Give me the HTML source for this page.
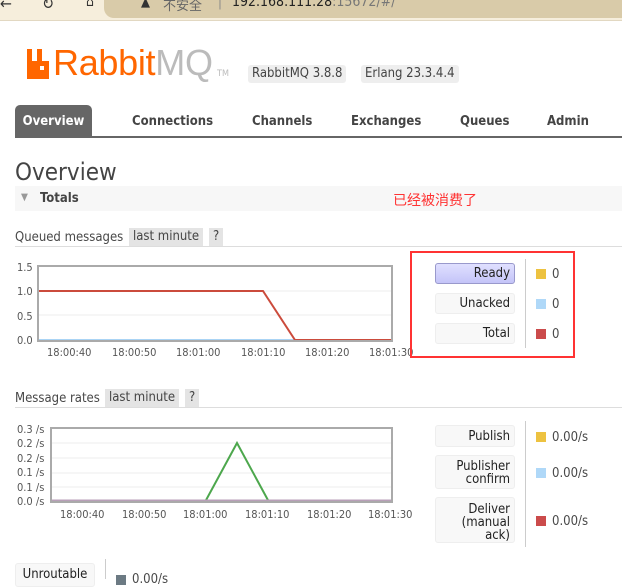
<!DOCTYPE html>
<html><head><meta charset="utf-8"><style>
*{margin:0;padding:0;box-sizing:border-box}
body{width:622px;height:578px;overflow:hidden;background:#fff;font-family:"DejaVu Sans Condensed","DejaVu Sans","Liberation Sans","Noto Sans CJK SC",sans-serif;font-size:13px;color:#484848;position:relative}
.a{position:absolute;white-space:nowrap}
.tab{position:absolute;top:105px;height:32px;line-height:34px;font-weight:bold;color:#444;font-size:13px}
.pill{position:absolute;background:#e4e4e4;height:18px;line-height:18px;padding:0 4px;color:#444}
.btn{position:absolute;background:#f8f8f8;border:1px solid #eee;border-radius:3px;text-align:right;padding:0 4px;color:#222;font-size:13px;line-height:13px}
.sq{position:absolute;width:10px;height:10px}
.lab{position:absolute;font-size:11px;color:#555;white-space:nowrap}
</style></head><body>
<div class="a" style="left:0;top:0;width:622px;height:20px;background:#f6eedc"></div>
<div class="a" style="left:104px;top:-10px;width:530px;height:28px;background:#d9cba9;border-radius:10px"></div>
<div class="a" style="left:0;top:20px;width:622px;height:1px;background:#e2d8c2"></div>
<div class="a" style="left:0;top:-6px;font-size:16px;color:#333">←</div>
<div class="a" style="left:42px;top:-6px;font-size:16px;color:#333">↻</div>
<div class="a" style="left:86px;top:-6px;font-size:14px;color:#333">⌂</div>
<div class="a" style="left:141px;top:-5px;font-size:13px;color:#333">▲</div>
<div class="a" style="left:163px;top:-5px;font-size:13px;color:#666">不安全</div>
<div class="a" style="left:218px;top:-5px;font-size:13px;color:#888">|</div>
<div class="a" style="left:232px;top:-6px;font-size:14px;color:#222">192.168.111.28<span style="color:#777">:15672/#/</span></div>

<svg class="a" style="left:27px;top:49px" width="22" height="30" viewBox="0 0 22 30"><path d="M0 0h5v12h5V0h5v12h7v18H0z" fill="#f60"/><rect x="13" y="17" width="4" height="4" fill="#fff"/></svg>
<div class="a" style="left:53px;top:42px;font-size:36px;font-family:'Liberation Sans',sans-serif;color:#f60;letter-spacing:-0.3px">Rabbit<span style="color:#bbb">MQ</span></div>
<div class="a" style="left:217px;top:69px;font-size:9px;color:#bbb">TM</div>
<div class="pill" style="left:248px;top:65px;border-radius:3px;background:#eee">RabbitMQ 3.8.8</div>
<div class="pill" style="left:361px;top:65px;border-radius:3px;background:#eee">Erlang 23.3.4.4</div>

<div class="tab" style="left:15px;width:77px;background:#666;color:#fff;border-radius:5px 5px 0 0;text-align:center">Overview</div>
<div class="tab" style="left:132px">Connections</div>
<div class="tab" style="left:252px">Channels</div>
<div class="tab" style="left:351px">Exchanges</div>
<div class="tab" style="left:460px">Queues</div>
<div class="tab" style="left:547px">Admin</div>
<div class="a" style="left:15px;top:136px;width:607px;height:2px;background:#666"></div>

<div class="a" style="left:15px;top:158px;font-size:24px;color:#444">Overview</div>
<div class="a" style="left:15px;top:186px;width:607px;height:25px;background:#f7f7f7"></div>
<div class="a" style="left:21px;top:192px;font-size:10px;color:#999">▼</div>
<div class="a" style="left:40px;top:191px;font-weight:bold;color:#444">Totals</div>
<div class="a" style="left:393px;top:190px;font-size:14px;color:#f33;font-family:'Noto Sans CJK SC',sans-serif">已经被消费了</div>

<div class="a" style="left:15px;top:230px">Queued messages</div>
<div class="pill" style="left:129px;top:228px">last minute</div>
<div class="pill" style="left:209px;top:228px">?</div>
<div class="a" style="left:15px;top:246px;width:607px;height:1px;background:#ddd"></div>

<div class="lab" style="left:17px;top:261px">1.5</div>
<div class="lab" style="left:17px;top:285px">1.0</div>
<div class="lab" style="left:17px;top:310px">0.5</div>
<div class="lab" style="left:17px;top:334px">0.0</div>
<svg class="a" style="left:37px;top:265px" width="356" height="78">
<line x1="0" y1="26" x2="356" y2="26" stroke="#eee"/><line x1="0" y1="50" x2="356" y2="50" stroke="#eee"/>
<line x1="1" y1="75" x2="355" y2="75" stroke="#aad4f5" stroke-width="2"/>
<polyline points="1,26 226,26 258,75 355,75" fill="none" stroke="#cb4b3c" stroke-width="2"/>
<rect x="1" y="1" width="354" height="75" fill="none" stroke="#aaa" stroke-width="2"/></svg>
<div class="lab" style="left:47px;top:346px">18:00:40</div>
<div class="lab" style="left:112px;top:346px">18:00:50</div>
<div class="lab" style="left:176px;top:346px">18:01:00</div>
<div class="lab" style="left:241px;top:346px">18:01:10</div>
<div class="lab" style="left:305px;top:346px">18:01:20</div>
<div class="lab" style="left:369px;top:346px">18:01:30</div>

<div class="a" style="left:410px;top:251px;width:165px;height:107px;border:2px solid #f33"></div>
<div class="btn" style="left:435px;top:263px;width:80px;height:21px;line-height:20px;background:linear-gradient(#e0e0ff,#c4c4f8);border-color:#99c">Ready</div>
<div class="btn" style="left:435px;top:293px;width:80px;height:21px;line-height:20px">Unacked</div>
<div class="btn" style="left:435px;top:323px;width:80px;height:21px;line-height:20px">Total</div>
<div class="a" style="left:525px;top:259px;width:1px;height:89px;background:#ccc"></div>
<div class="sq" style="left:536px;top:269px;background:#edc240"></div><div class="a" style="left:552px;top:267px">0</div>
<div class="sq" style="left:536px;top:299px;background:#afd8f8"></div><div class="a" style="left:552px;top:297px">0</div>
<div class="sq" style="left:536px;top:329px;background:#cb4b4b"></div><div class="a" style="left:552px;top:327px">0</div>

<div class="a" style="left:15px;top:391px">Message rates</div>
<div class="pill" style="left:105px;top:389px">last minute</div>
<div class="pill" style="left:185px;top:389px">?</div>
<div class="a" style="left:15px;top:407px;width:607px;height:1px;background:#ddd"></div>

<div class="lab" style="left:17px;top:423px">0.3 /s</div>
<div class="lab" style="left:17px;top:437px">0.2 /s</div>
<div class="lab" style="left:17px;top:452px">0.2 /s</div>
<div class="lab" style="left:17px;top:466px">0.1 /s</div>
<div class="lab" style="left:17px;top:481px">0.1 /s</div>
<div class="lab" style="left:17px;top:495px">0.0 /s</div>
<svg class="a" style="left:50px;top:427px" width="343" height="77">
<line x1="0" y1="16" x2="343" y2="16" stroke="#eee"/><line x1="0" y1="31" x2="343" y2="31" stroke="#eee"/><line x1="0" y1="46" x2="343" y2="46" stroke="#eee"/><line x1="0" y1="60" x2="343" y2="60" stroke="#eee"/>
<polyline points="155,75 187,16 219,75" fill="none" stroke="#4da74d" stroke-width="2"/>
<line x1="1" y1="74" x2="342" y2="74" stroke="#b89fb8" stroke-width="3"/>
<rect x="1" y="1" width="341" height="74" fill="none" stroke="#aaa" stroke-width="2"/></svg>
<div class="lab" style="left:60px;top:508px">18:00:40</div>
<div class="lab" style="left:122px;top:508px">18:00:50</div>
<div class="lab" style="left:183px;top:508px">18:01:00</div>
<div class="lab" style="left:245px;top:508px">18:01:10</div>
<div class="lab" style="left:307px;top:508px">18:01:20</div>
<div class="lab" style="left:368px;top:508px">18:01:30</div>

<div class="btn" style="left:435px;top:425px;width:80px;height:22px;line-height:21px">Publish</div>
<div class="btn" style="left:435px;top:455px;width:80px;height:34px;padding-top:4px">Publisher<br>confirm</div>
<div class="btn" style="left:435px;top:497px;width:80px;height:46px;padding-top:5px">Deliver<br>(manual<br>ack)</div>
<div class="a" style="left:525px;top:421px;width:1px;height:126px;background:#ccc"></div>
<div class="sq" style="left:536px;top:432px;background:#edc240"></div><div class="a" style="left:552px;top:430px">0.00/s</div>
<div class="sq" style="left:536px;top:468px;background:#afd8f8"></div><div class="a" style="left:552px;top:466px">0.00/s</div>
<div class="sq" style="left:536px;top:516px;background:#cb4b4b"></div><div class="a" style="left:552px;top:514px">0.00/s</div>

<div class="btn" style="left:15px;top:563px;width:80px;height:24px;line-height:22px;text-align:center">Unroutable</div>
<div class="a" style="left:105px;top:559px;width:1px;height:20px;background:#ccc"></div>
<div class="sq" style="left:116px;top:575px;background:#6c7a83"></div><div class="a" style="left:132px;top:572px">0.00/s</div>
</body></html>
